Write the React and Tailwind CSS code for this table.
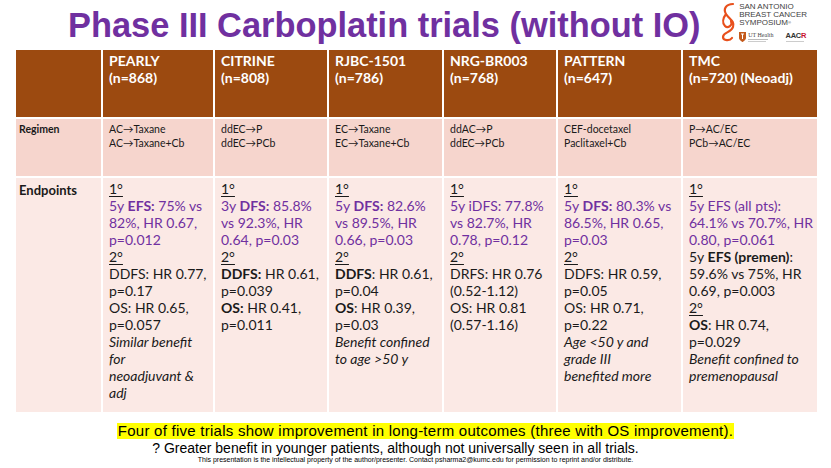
import React from 'react';

const PURPLE = 'text-[#7030a0]';

const trials = [
  { name: 'PEARLY', n: '(n=868)', regimen: ['AC→Taxane', 'AC→Taxane+Cb'] },
  { name: 'CITRINE', n: '(n=808)', regimen: ['ddEC→P', 'ddEC→PCb'] },
  { name: 'RJBC-1501', n: '(n=786)', regimen: ['EC→Taxane', 'EC→Taxane+Cb'] },
  { name: 'NRG-BR003', n: '(n=768)', regimen: ['ddAC→P', 'ddEC→PCb'] },
  { name: 'PATTERN', n: '(n=647)', regimen: ['CEF-docetaxel', 'Paclitaxel+Cb'] },
  { name: 'TMC', n: '(n=720) (Neoadj)', regimen: ['P→AC/EC', 'PCb→AC/EC'] },
];

const Deg = ({ children }) => <div className="underline underline-offset-2">{children}</div>;
const P = ({ children }) => <div className={PURPLE}>{children}</div>;
const I = ({ children }) => <div className="italic">{children}</div>;

const endpoints = [
  <>
    <Deg>1°</Deg>
    <P>5y <b>EFS:</b> 75% vs</P>
    <P>82%, HR 0.67,</P>
    <P>p=0.012</P>
    <Deg>2°</Deg>
    <div>DDFS: HR 0.77,</div>
    <div>p=0.17</div>
    <div>OS: HR 0.65,</div>
    <div>p=0.057</div>
    <I>Similar benefit</I>
    <I>for</I>
    <I>neoadjuvant &amp;</I>
    <I>adj</I>
  </>,
  <>
    <Deg>1°</Deg>
    <P>3y <b>DFS:</b> 85.8%</P>
    <P>vs 92.3%, HR</P>
    <P>0.64, p=0.03</P>
    <Deg>2°</Deg>
    <div><b>DDFS:</b> HR 0.61,</div>
    <div>p=0.039</div>
    <div><b>OS:</b> HR 0.41,</div>
    <div>p=0.011</div>
  </>,
  <>
    <Deg>1°</Deg>
    <P>5y <b>DFS:</b> 82.6%</P>
    <P>vs 89.5%, HR</P>
    <P>0.66, p=0.03</P>
    <Deg>2°</Deg>
    <div><b>DDFS</b>: HR 0.61,</div>
    <div>p=0.04</div>
    <div><b>OS</b>: HR 0.39,</div>
    <div>p=0.03</div>
    <I>Benefit confined</I>
    <I>to age &gt;50 y</I>
  </>,
  <>
    <Deg>1°</Deg>
    <P>5y iDFS: 77.8%</P>
    <P>vs 82.7%, HR</P>
    <P>0.78, p=0.12</P>
    <Deg>2°</Deg>
    <div>DRFS: HR 0.76</div>
    <div>(0.52-1.12)</div>
    <div>OS: HR 0.81</div>
    <div>(0.57-1.16)</div>
  </>,
  <>
    <Deg>1°</Deg>
    <P>5y <b>DFS:</b> 80.3% vs</P>
    <P>86.5%, HR 0.65,</P>
    <P>p=0.03</P>
    <Deg>2°</Deg>
    <div>DDFS: HR 0.59,</div>
    <div>p=0.05</div>
    <div>OS: HR 0.71,</div>
    <div>p=0.22</div>
    <I>Age &lt;50 y and</I>
    <I>grade III</I>
    <I>benefited more</I>
  </>,
  <>
    <Deg>1°</Deg>
    <P>5y EFS (all pts):</P>
    <P>64.1% vs 70.7%, HR</P>
    <P>0.80, p=0.061</P>
    <div>5y <b>EFS (premen)</b>:</div>
    <div>59.6% vs 75%, HR</div>
    <div>0.69, p=0.003</div>
    <Deg>2°</Deg>
    <div><b>OS</b>: HR 0.74,</div>
    <div>p=0.029</div>
    <I>Benefit confined to</I>
    <I>premenopausal</I>
  </>,
];

function Logo() {
  return (
    <div className="flex items-start gap-[1px] pt-[2px]">
      <svg width="18" height="40" viewBox="0 0 18 40">
        <path
          d="M13 2 C6 2 3 7 6 12 C9 17 15 19 13 25 C11 31 3 30 3 35 C3 39 10 39 12 36 M6 12 C3 16 2 21 5 24 C8 27 13 23 11 19"
          fill="none"
          stroke="#e8501c"
          strokeWidth="2.2"
          strokeLinecap="round"
        />
      </svg>
      <div className="flex flex-col">
        <div className="text-[8px] leading-[8px] text-[#3f3f3f] font-['Liberation_Sans',sans-serif] whitespace-nowrap pt-[1px]">
          <div>SAN ANTONIO</div>
          <div>BREAST CANCER</div>
          <div>SYMPOSIUM<span className="text-[4px] align-top">®</span></div>
        </div>
        <div className="mt-[5px] flex items-center gap-[12px]">
          <div className="flex items-center gap-[2px]">
            <svg width="7" height="10" viewBox="0 0 7 10">
              <path d="M0 0 H7 V6 C7 8 3.5 10 3.5 10 C3.5 10 0 8 0 6 Z" fill="#c45a1c" />
              <path d="M2 2 H5 M3.5 2 V7" stroke="#fff" strokeWidth="1" />
            </svg>
            <div className="flex flex-col">
              <div className="text-[6px] leading-[6px] text-[#444] font-['Liberation_Serif',serif] whitespace-nowrap">UT Health</div>
              <div className="w-[20px] h-[1px] bg-[#bbb] mt-[1px]" />
              <div className="w-[18px] h-[1px] bg-[#ccc] mt-[1px]" />
            </div>
          </div>
          <div className="flex flex-col">
            <div className="text-[7.5px] font-bold leading-[7.5px] text-[#333] font-['Liberation_Sans',sans-serif] tracking-[-0.3px]">AAC<span className="text-[#c8102e]">R</span></div>
            <div className="w-[18px] h-[1px] bg-[#ccc] mt-[1px]" />
          </div>
        </div>
      </div>
    </div>
  );
}

export default function App() {
  return (
    <div className="w-[831px] h-[468px] bg-white overflow-hidden relative font-['Lato',sans-serif]">
      {/* title */}
      <div className="h-[50px] flex items-start">
        <h1 className="ml-[68px] mt-[5px] text-[34.4px] leading-[40px] font-bold text-[#7030a0] font-['Liberation_Sans',Arial,sans-serif] whitespace-nowrap">
          Phase III Carboplatin trials (without IO)
        </h1>
        <div className="ml-auto mr-[24px]">
          <Logo />
        </div>
      </div>

      {/* table */}
      <div className="ml-[16px] w-[801px] grid grid-cols-[85px_110px_112px_113px_112px_123px_134px] grid-rows-[67px_57px_234px] gap-[2px] bg-white">
        <div className="bg-[#9c4a10]" />
        {trials.map((t) => (
          <div key={t.name} className="bg-[#9c4a10] text-white font-bold text-[14px] leading-[17px] pl-[6px] pt-[2px] whitespace-nowrap">
            <div>{t.name}</div>
            <div>{t.n}</div>
          </div>
        ))}

        <div className="bg-[#f6d5cd] text-[10.5px] leading-[14px] font-bold text-[#1a1a1a] pl-[3px] pt-[3px]">Regimen</div>
        {trials.map((t) => (
          <div key={t.name} className="bg-[#f6d5cd] text-[10.5px] leading-[14px] text-[#1a1a1a] pl-[6px] pt-[3px] whitespace-nowrap">
            {t.regimen.map((r) => (
              <div key={r}>{r}</div>
            ))}
          </div>
        ))}

        <div className="bg-[#fbe9e5] text-[13px] leading-[17px] font-bold text-[#1a1a1a] pl-[3px] pt-[4px]">Endpoints</div>
        {endpoints.map((e, i) => (
          <div key={i} className="bg-[#fbe9e5] text-[14px] leading-[17px] text-[#1a1a1a] pl-[6px] pt-[2px] whitespace-nowrap">
            {e}
          </div>
        ))}
      </div>

      {/* footer notes */}
      <div className="mt-[11px] flex flex-col items-center font-['Liberation_Sans',Arial,sans-serif] text-black">
        <div className="ml-[20px] text-[15px] leading-[16px] tracking-[0.25px] bg-[#ffff00] px-[1px]">
          Four of five trials show improvement in long-term outcomes (three with OS improvement).
        </div>
        <div className="mr-[40px] text-[14px] leading-[17px] mt-[1px]">
          ? Greater benefit in younger patients, although not universally seen in all trials.
        </div>
        <div className="text-[7px] leading-[8px] mt-[-1px]">
          This presentation is the intellectual property of the author/presenter. Contact psharma2@kumc.edu for permission to reprint and/or distribute.
        </div>
      </div>
    </div>
  );
}
